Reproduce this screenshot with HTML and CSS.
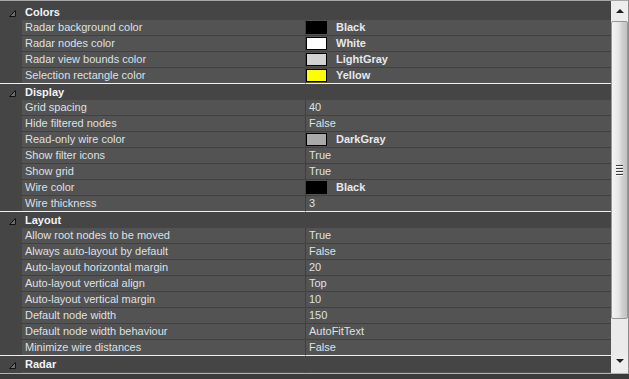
FILE: index.html
```html
<!DOCTYPE html>
<html lang="en">
<head>
    <meta charset="UTF-8">
    <title>Property Grid</title>
    <link rel="stylesheet" href="styles.css">
</head>
<body>

<div class="panel">
    <div class="grid">
        <div class="category">
            <span class="margin"><svg class="glyph" width="7" height="7" viewBox="0 0 7 7"><polygon points="6.5,0.5 6.5,6.5 0.5,6.5" fill="#6c6c6c" stroke="#121212" stroke-width="1"/></svg></span>
            <span class="cat-name">Colors</span>
        </div>
        <div class="prop"><span class="margin"></span><span class="name">Radar background color</span><span class="value"><span class="swatch sw-black"></span><b>Black</b></span></div>
        <div class="prop"><span class="margin"></span><span class="name">Radar nodes color</span><span class="value"><span class="swatch sw-white"></span><b>White</b></span></div>
        <div class="prop"><span class="margin"></span><span class="name">Radar view bounds color</span><span class="value"><span class="swatch sw-lightgray"></span><b>LightGray</b></span></div>
        <div class="prop last"><span class="margin"></span><span class="name">Selection rectangle color</span><span class="value"><span class="swatch sw-yellow"></span><b>Yellow</b></span></div>

        <div class="category">
            <span class="margin"><svg class="glyph" width="7" height="7" viewBox="0 0 7 7"><polygon points="6.5,0.5 6.5,6.5 0.5,6.5" fill="#6c6c6c" stroke="#121212" stroke-width="1"/></svg></span>
            <span class="cat-name">Display</span>
        </div>
        <div class="prop"><span class="margin"></span><span class="name">Grid spacing</span><span class="value">40</span></div>
        <div class="prop"><span class="margin"></span><span class="name">Hide filtered nodes</span><span class="value">False</span></div>
        <div class="prop"><span class="margin"></span><span class="name">Read-only wire color</span><span class="value"><span class="swatch sw-darkgray"></span><b>DarkGray</b></span></div>
        <div class="prop"><span class="margin"></span><span class="name">Show filter icons</span><span class="value">True</span></div>
        <div class="prop"><span class="margin"></span><span class="name">Show grid</span><span class="value">True</span></div>
        <div class="prop"><span class="margin"></span><span class="name">Wire color</span><span class="value"><span class="swatch sw-black"></span><b>Black</b></span></div>
        <div class="prop last"><span class="margin"></span><span class="name">Wire thickness</span><span class="value">3</span></div>

        <div class="category">
            <span class="margin"><svg class="glyph" width="7" height="7" viewBox="0 0 7 7"><polygon points="6.5,0.5 6.5,6.5 0.5,6.5" fill="#6c6c6c" stroke="#121212" stroke-width="1"/></svg></span>
            <span class="cat-name">Layout</span>
        </div>
        <div class="prop"><span class="margin"></span><span class="name">Allow root nodes to be moved</span><span class="value">True</span></div>
        <div class="prop"><span class="margin"></span><span class="name">Always auto-layout by default</span><span class="value">False</span></div>
        <div class="prop"><span class="margin"></span><span class="name">Auto-layout horizontal margin</span><span class="value">20</span></div>
        <div class="prop"><span class="margin"></span><span class="name">Auto-layout vertical align</span><span class="value">Top</span></div>
        <div class="prop"><span class="margin"></span><span class="name">Auto-layout vertical margin</span><span class="value">10</span></div>
        <div class="prop"><span class="margin"></span><span class="name">Default node width</span><span class="value">150</span></div>
        <div class="prop"><span class="margin"></span><span class="name">Default node width behaviour</span><span class="value">AutoFitText</span></div>
        <div class="prop last"><span class="margin"></span><span class="name">Minimize wire distances</span><span class="value">False</span></div>

        <div class="category">
            <span class="margin"><svg class="glyph" width="7" height="7" viewBox="0 0 7 7"><polygon points="6.5,0.5 6.5,6.5 0.5,6.5" fill="#6c6c6c" stroke="#121212" stroke-width="1"/></svg></span>
            <span class="cat-name">Radar</span>
        </div>
        <div class="prop"><span class="margin"></span><span class="name">Radar bounds height</span><span class="value">2000</span></div>
    </div>

    <!-- Vertical scrollbar -->
    <div class="scrollbar">
        <div class="sb-button"><span class="arrow-up"></span></div>
        <div class="sb-thumb">
            <span class="grip"></span>
            <span class="grip"></span>
            <span class="grip"></span>
            <span class="grip"></span>
        </div>
        <div class="sb-track"></div>
        <div class="sb-button sb-bottom"><span class="arrow-down"></span></div>
    </div>
</div>

</body>
</html>
```

FILE: styles.css
```css
body {
    margin: 0;
    padding: 0;
    background-color: #3b3b3b;
    font-family: "Liberation Sans", Arial, sans-serif;
    font-size: 11px;
    color: #dde0e6;
}

/* Outer frame */
.panel {
    display: flex;
    height: 372px;
    border-top: 1px solid #a6a6a6;
    border-bottom: 1px solid #b2b2b2;
    border-right: 1px solid #8c8c8c;
    background-color: #454545;
}

.grid {
    flex: 1;
    overflow: hidden;
    padding-top: 3px;
    background-color: #454545;
}

/* Category header */
.category {
    display: flex;
    height: 16px;
    line-height: 16px;
    background-color: #454545;
}

.category .margin {
    display: flex;
    align-items: flex-start;
    justify-content: flex-end;
    padding-top: 6px;
    padding-right: 6px;
    box-sizing: border-box;
}

.glyph {
    display: block;
}

.cat-name {
    padding-left: 3px;
    font-weight: bold;
    color: #f2f3f6;
}

/* Property rows */
.prop {
    display: flex;
    height: 16px;
    line-height: 15px;
}

.margin {
    width: 22px;
    flex-shrink: 0;
    background-color: #454545;
}

.prop .margin {
    border-bottom: 1px solid #454545;
}

.name,
.value {
    background-color: #535353;
    border-bottom: 1px solid #404040;
    padding-left: 3px;
    white-space: nowrap;
    overflow: hidden;
}

.name {
    width: 280px;
    flex-shrink: 0;
}

.value {
    flex: 1;
    display: flex;
    align-items: flex-start;
    border-left: 1px solid #404040;
}

.value b {
    font-weight: bold;
    color: #e6e8ee;
}

.prop.last .margin,
.prop.last .name,
.prop.last .value {
    border-bottom-color: #f0f0f0;
}

/* Colour swatches */
.swatch {
    width: 19px;
    height: 11px;
    margin: 1px 9px 0 -3px;
    border: 1px solid #000;
    flex-shrink: 0;
}

.sw-black { background-color: #000000; }
.sw-white { background-color: #ffffff; }
.sw-lightgray { background-color: #d3d3d3; }
.sw-yellow { background-color: #ffff00; }
.sw-darkgray { background-color: #a9a9a9; }

/* Scrollbar */
.scrollbar {
    width: 17px;
    display: flex;
    flex-direction: column;
    background-color: #ebebeb;
}

.sb-button {
    height: 19px;
    display: flex;
    justify-content: center;
    align-items: center;
    background-color: #ededed;
}

.sb-bottom {
    height: 16px;
    align-items: flex-start;
    padding-top: 2px;
    box-sizing: border-box;
}

.arrow-up {
    width: 0;
    height: 0;
    border-left: 4px solid transparent;
    border-right: 4px solid transparent;
    border-bottom: 4px solid #1e1e1e;
}

.arrow-down {
    width: 0;
    height: 0;
    border-left: 4px solid transparent;
    border-right: 4px solid transparent;
    border-top: 4px solid #1e1e1e;
}

.sb-thumb {
    height: 296px;
    margin: 1px 0 0 0;
    border: 1px solid #979797;
    border-radius: 2px;
    background-image: linear-gradient(to right, #f4f4f4, #e6e6e6 45%, #cfcfcf 70%, #c2c2c2);
    display: flex;
    flex-direction: column;
    justify-content: center;
    align-items: center;
    gap: 1px;
}

.grip {
    display: block;
    width: 7px;
    height: 1px;
    background-color: #3c3c3c;
    border-bottom: 1px solid #f8f8f8;
}

.sb-track {
    flex: 1;
    background-color: #ebebeb;
}
```
